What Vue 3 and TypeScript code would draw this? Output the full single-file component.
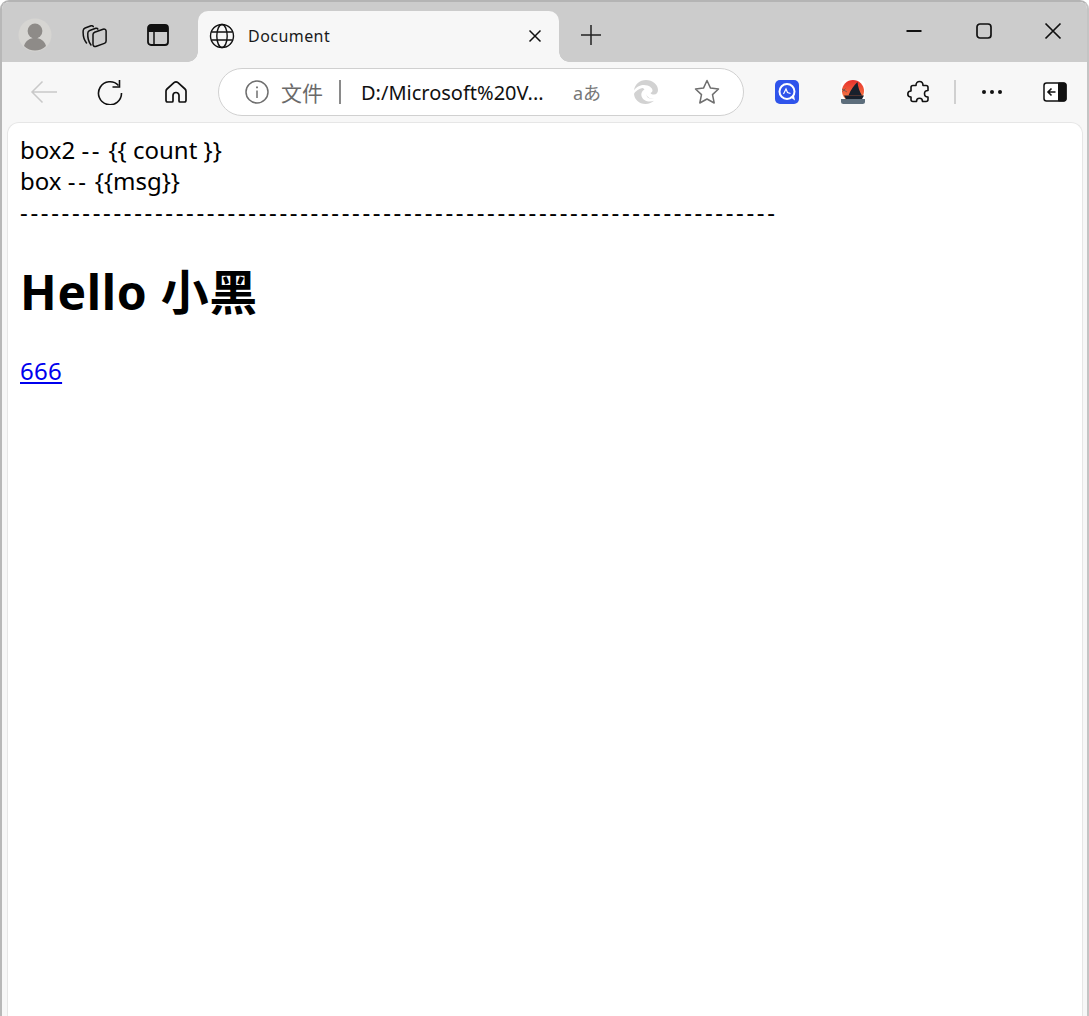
<script setup lang="ts">
const dashes = '-'.repeat(73)
</script>

<template>
  <div class="desktop">
    <div class="window">
      <header class="tabstrip">
        <div class="slot avatar-slot">
          <svg width="34" height="34" viewBox="0 0 34 34">
            <circle cx="17" cy="17" r="16.500" fill="#d6d5d2" />
            <circle cx="17" cy="13" r="7.400" fill="#8e8b88" />
            <path d="M6 28c1.500-5.500 6-8 11-8s9.500 2.500 11 8c-3 3-7 4.500-11 4.500S9 31 6 28z" fill="#8e8b88" />
          </svg>
        </div>
        <div class="slot collections-slot">
          <svg width="26" height="26" viewBox="0 0 26 26" fill="none" stroke="#111" stroke-width="1.500" stroke-linejoin="round" stroke-linecap="round">
            <path d="M4.500 21C2 18 .8 13.500 1.200 8.500c.1-1.300.7-2 1.900-2.500l6-2.200c1-.3 1.800 0 2.200.8" />
            <path d="M9 23c-2.300-3-3.500-7.500-3.200-12 .1-1.300.7-2 1.900-2.500l6-2.200c1-.3 1.800 0 2.200.8" />
            <path d="M11 12.500c0-1.200.6-1.900 1.600-2.300l8.500-3c1.500-.5 3 .3 3 1.800v10c0 1.200-.6 2-1.700 2.400l-8 2.900c-2 .7-3.400-.2-3.400-2z" />
          </svg>
        </div>
        <div class="slot tabs-slot">
          <svg width="24" height="24" viewBox="0 0 24 24" fill="none">
            <rect x="2" y="2" width="20" height="20" rx="3" stroke="#111" stroke-width="1.800" />
            <path d="M2 5a3 3 0 0 1 3-3h14a3 3 0 0 1 3 3v4H2z" fill="#111" />
            <path d="M8 9v13" stroke="#111" stroke-width="1.500" />
          </svg>
        </div>
        <div class="tab">
          <svg class="globe" width="26" height="26" viewBox="0 0 26 26" fill="none" stroke="#111" stroke-width="1.400">
            <circle cx="13" cy="13" r="11.500" />
            <ellipse cx="13" cy="13" rx="5.200" ry="11.500" />
            <path d="M2.500 9h21M2.500 17h21" />
          </svg>
          <span class="tab-title">Document</span>
          <svg class="tab-close" width="14" height="14" viewBox="0 0 14 14" stroke="#111" stroke-width="1.500">
            <path d="M1.500 1.500l11 11M12.500 1.500l-11 11" />
          </svg>
        </div>
        <div class="slot new-tab">
          <svg width="22" height="22" viewBox="0 0 22 22" stroke="#222" stroke-width="1.500">
            <path d="M11 1v20M1 11h20" />
          </svg>
        </div>
        <div class="grow"></div>
        <div class="slot win">
          <svg width="16" height="16" viewBox="0 0 16 16" stroke="#111" stroke-width="1.800">
            <path d="M0.500 8h15" />
          </svg>
        </div>
        <div class="slot win">
          <svg width="16" height="16" viewBox="0 0 16 16" fill="none" stroke="#111" stroke-width="1.700">
            <rect x="1" y="1" width="14" height="14" rx="3" />
          </svg>
        </div>
        <div class="slot win">
          <svg width="18" height="18" viewBox="0 0 18 18" stroke="#111" stroke-width="1.700">
            <path d="M1.500 1.500l15 15M16.500 1.500l-15 15" />
          </svg>
        </div>
      </header>

      <nav class="toolbar">
        <div class="tool">
          <svg width="28" height="24" viewBox="0 0 28 24" fill="none" stroke="#c9c9c9" stroke-width="1.500">
            <path d="M27 12H2M12.500 1.500L2 12l10.500 10.500" />
          </svg>
        </div>
        <div class="tool">
          <svg width="26" height="26" viewBox="0 0 26 26" fill="none" stroke="#111" stroke-width="1.600">
            <path d="M21.500 6.500A11.500 11.500 0 1 0 24.500 14" />
            <path d="M22.500 1v7h-7" />
          </svg>
        </div>
        <div class="tool">
          <svg width="24" height="24" viewBox="0 0 24 24" fill="none" stroke="#111" stroke-width="1.700" stroke-linejoin="round">
            <path d="M10 2.700a3 3 0 0 1 4 0l7 6.300c.8.700 1 1.300 1 2.300v9c0 1-.8 1.700-1.700 1.700H16c-.6 0-1-.4-1-1v-5.500c0-1.700-1.300-3-3-3s-3 1.300-3 3V21c0 .6-.4 1-1 1H3.700C2.800 22 2 21.300 2 20.300v-9c0-1 .2-1.600 1-2.300z" />
          </svg>
        </div>
        <div class="address">
          <svg class="info" width="24" height="24" viewBox="0 0 24 24" fill="none" stroke="#6f6f6f" stroke-width="1.500">
            <circle cx="12" cy="12" r="11" />
            <path d="M12 10.500v7.500" />
            <path d="M12 6.500v1.800" stroke-width="1.800" />
          </svg>
          <span class="scheme">文件</span>
          <span class="divider"></span>
          <span class="url">D:/Microsoft%20V...</span>
          <span class="translate">aあ</span>
          <svg class="edge" width="24" height="24" viewBox="0 0 24 24" fill="#d2d2d2">
            <path d="M12 0C5.500 0 .8 4.500 0 10.500 2.500 6.500 6.500 5 10 5c5 0 8.500 3 8.500 5.500 0 1.200-.8 2-2 2.500.5 1 2 1.500 3.500 1.500 2.500 0 4-2 4-4.500C24 4.500 18.500 0 12 0z" />
            <path d="M9 8c-4 .5-8 3.500-9 6 .5 5.500 5 10 11.500 10 3.500 0 6.500-1.200 8.500-3.200-3 1.200-7 1-9.500-.8C7.500 18 6.500 14.500 8 12c.5-1.200 1.500-2 2.500-2.500z" />
            <path d="M12 13.500c.5 3 3.500 5.500 7.500 5 1.200-.2 2-.6 2.500-1-2.500 1.500-5.500 1.500-7.500.5-1.500-.8-2.300-2.800-2.500-4.500z" />
          </svg>
          <svg class="star" width="26" height="26" viewBox="0 0 26 26" fill="none" stroke="#6f6f6f" stroke-width="1.500" stroke-linejoin="round">
            <path d="M13 1.500l3.500 7.600 8 .9-6 5.600 1.700 8.400L13 20l-7.200 4 1.700-8.400-6-5.600 8-.9z" />
          </svg>
        </div>
        <div class="tool ext-first">
          <svg width="24" height="24" viewBox="0 0 24 24">
            <rect width="24" height="24" rx="5" fill="#2f54eb" />
            <circle cx="12" cy="11.500" r="7.500" fill="none" stroke="#fff" stroke-width="2" />
            <path d="M15 17l5 3.500-1-5z" fill="#fff" />
            <path d="M8.500 14l2.500-5 1.500 3.500 3 1" fill="none" stroke="#fff" stroke-width="1.200" />
          </svg>
        </div>
        <div class="tool">
          <svg width="24" height="24" viewBox="0 0 24 24">
            <defs>
              <linearGradient id="sun" x1="0" y1="0" x2="0" y2="1">
                <stop offset="0" stop-color="#e8302c" />
                <stop offset="1" stop-color="#f98a4a" />
              </linearGradient>
            </defs>
            <rect width="24" height="24" rx="5" fill="#fff" />
            <circle cx="12" cy="11" r="11" fill="url(#sun)" />
            <path d="M16.500 2C13 5.500 9.500 10 7.500 15.500H21C18.500 12 17 7 16.500 2z" fill="#18202c" />
            <path d="M3 15.500h20l-2.500 4.500H5.500z" fill="#18202c" />
            <path d="M0 19h24v2.500A2.500 2.500 0 0 1 21.500 24h-19A2.500 2.500 0 0 1 0 21.500z" fill="#5d6e7c" />
            <path d="M1 9l5 3M1.500 11.500l3-3" stroke="#6a5a50" stroke-width=".8" />
          </svg>
        </div>
        <div class="tool">
          <svg width="24" height="24" viewBox="0 0 24 24" fill="none" stroke="#111" stroke-width="1.600" stroke-linejoin="round">
            <path d="M9 5.500C9 3 10.500 1.500 12.500 1.500S16 3 16 5.500h3c1.400 0 2 .8 2 2v3c-2.200 0-3.500 1.300-3.500 3.200s1.300 3.300 3.500 3.300v2.500c0 1.200-.8 2-2 2h-3.500c0-2-1.300-3.200-3-3.200s-3 1.200-3 3.200H6c-1.200 0-2-.8-2-2V17c-2 0-3.200-1.300-3.200-3S2 11 4 11V7.500c0-1.200.8-2 2-2z" />
          </svg>
        </div>
        <div class="tool-sep"></div>
        <div class="tool dots">
          <svg width="22" height="6" viewBox="0 0 22 6" fill="#111">
            <circle cx="3" cy="3" r="2" /><circle cx="11" cy="3" r="2" /><circle cx="19" cy="3" r="2" />
          </svg>
        </div>
        <div class="tool sidebar">
          <svg width="24" height="20" viewBox="0 0 24 20">
            <rect x="1" y="1" width="22" height="18" rx="2.500" fill="#fff" stroke="#111" stroke-width="1.500" />
            <path d="M15.500 1H21a2 2 0 0 1 2 2v14a2 2 0 0 1-2 2h-5.500z" fill="#111" stroke="#111" />
            <path d="M12.500 10H5M8.500 6.500L5 10l3.500 3.500" fill="none" stroke="#111" stroke-width="1.600" />
          </svg>
        </div>
      </nav>

      <main class="page">
        <div class="line">box2 <span class="dash">--</span> {{ '{' + '{ count }' + '}' }}</div>
        <div class="line">box <span class="dash">--</span> {{ '{' + '{msg}' + '}' }}</div>
        <div class="line dash">{{ dashes }}</div>
        <h1 class="heading">Hello 小黑</h1>
        <a class="link" href="#">666</a>
      </main>
    </div>
  </div>
</template>

<style scoped>
.desktop {
  width: 1089px;
  height: 1016px;
  overflow: hidden;
  background: #fff;
}
.window {
  box-sizing: border-box;
  width: 1089px;
  height: 1016px;
  display: flex;
  flex-direction: column;
  background: #f7f7f7;
  border-top: 2px solid #b4b4b4;
  border-left: 2px solid #b8b8b8;
  border-right: 2px solid #c4c4c4;
  border-radius: 9px 9px 0 0;
  overflow: hidden;
  font-family: "Noto Sans", "Noto Sans CJK SC", sans-serif;
}
.tabstrip {
  height: 60px;
  flex: none;
  display: flex;
  align-items: flex-start;
  background: #cccccc;
  padding-left: 2px;
}
.slot {
  height: 48px;
  margin-top: 9px;
  flex: none;
  display: flex;
  align-items: center;
  justify-content: center;
}
.avatar-slot { width: 62px; }
.collections-slot { width: 58px; }
.tabs-slot { width: 68px; }
.tab {
  position: relative;
  width: 361px;
  height: 51px;
  margin-top: 9px;
  margin-left: 6px;
  flex: none;
  box-sizing: border-box;
  padding: 0 17px 2px 11px;
  display: flex;
  align-items: center;
  background: #f7f7f7;
  border-radius: 10px 10px 0 0;
}
.tab::before,
.tab::after {
  content: "";
  position: absolute;
  bottom: 0;
  width: 10px;
  height: 10px;
  background: radial-gradient(circle at 0 0, transparent 9.500px, #f7f7f7 10px);
}
.tab::before {
  left: -10px;
}
.tab::after {
  right: -10px;
  background: radial-gradient(circle at 100% 0, transparent 9.500px, #f7f7f7 10px);
}
.globe { flex: none; }
.tab-title {
  margin-left: 13px;
  flex: 1;
  font-size: 16px;
  letter-spacing: 0.45px;
  color: #1a1a1a;
}
.tab-close { flex: none; }
.new-tab { width: 64px; }
.grow { flex: 1; }
.win { width: 70px; margin-top: 5px; }
.win:nth-last-child(1) { width: 68px; }

.toolbar {
  height: 60px;
  flex: none;
  display: flex;
  align-items: center;
  background: #f7f7f7;
  padding-left: 9px;
}
.tool {
  width: 66px;
  height: 48px;
  flex: none;
  display: flex;
  align-items: center;
  justify-content: center;
}
.address {
  box-sizing: border-box;
  width: 526px;
  height: 48px;
  margin-left: 9px;
  flex: none;
  display: flex;
  align-items: center;
  padding-left: 26px;
  background: #fff;
  border: 1.500px solid #d0d0d0;
  border-radius: 24px;
}
.info { flex: none; }
.scheme {
  margin-left: 12px;
  font-size: 21px;
  color: #6a6a6a;
  white-space: nowrap;
}
.divider {
  width: 2px;
  height: 24px;
  margin-left: 16px;
  background: #8a8a8a;
  flex: none;
}
.url {
  margin-left: 20px;
  width: 195px;
  flex: none;
  font-size: 20px;
  color: #111;
  white-space: nowrap;
}
.translate {
  width: 50px;
  margin-left: 6px;
  flex: none;
  font-size: 18px;
  color: #777;
  text-align: center;
}
.edge { margin-left: 22px; flex: none; }
.star { margin-left: 36px; flex: none; }
.ext-first { margin-left: 10px; }
.tool:nth-child(7) { margin-right: 1px; }
.tool-sep {
  width: 2px;
  height: 24px;
  margin-left: 1px;
  background: #d0d0d0;
  flex: none;
}
.dots { width: 72px; }
.sidebar { width: 53px; }

.page {
  flex: 1;
  margin: 0 4px 0 5px;
  padding: 11px 12px 0 12px;
  background: #fff;
  border: 1px solid #e6e6e6;
  border-bottom: 0;
  border-radius: 12px 12px 0 0;
  font-size: 24px;
  line-height: 31px;
  color: #000;
  min-height: 0;
}
.line { white-space: nowrap; }
.dash { letter-spacing: 2.65px; }
.heading {
  margin: 33px 0 31px;
  font-size: 48px;
  line-height: 64px;
  font-weight: 700;
  letter-spacing: 0.7px;
}
.link {
  color: #0000ee;
  text-decoration: underline;
  letter-spacing: 0.3px;
}
</style>
